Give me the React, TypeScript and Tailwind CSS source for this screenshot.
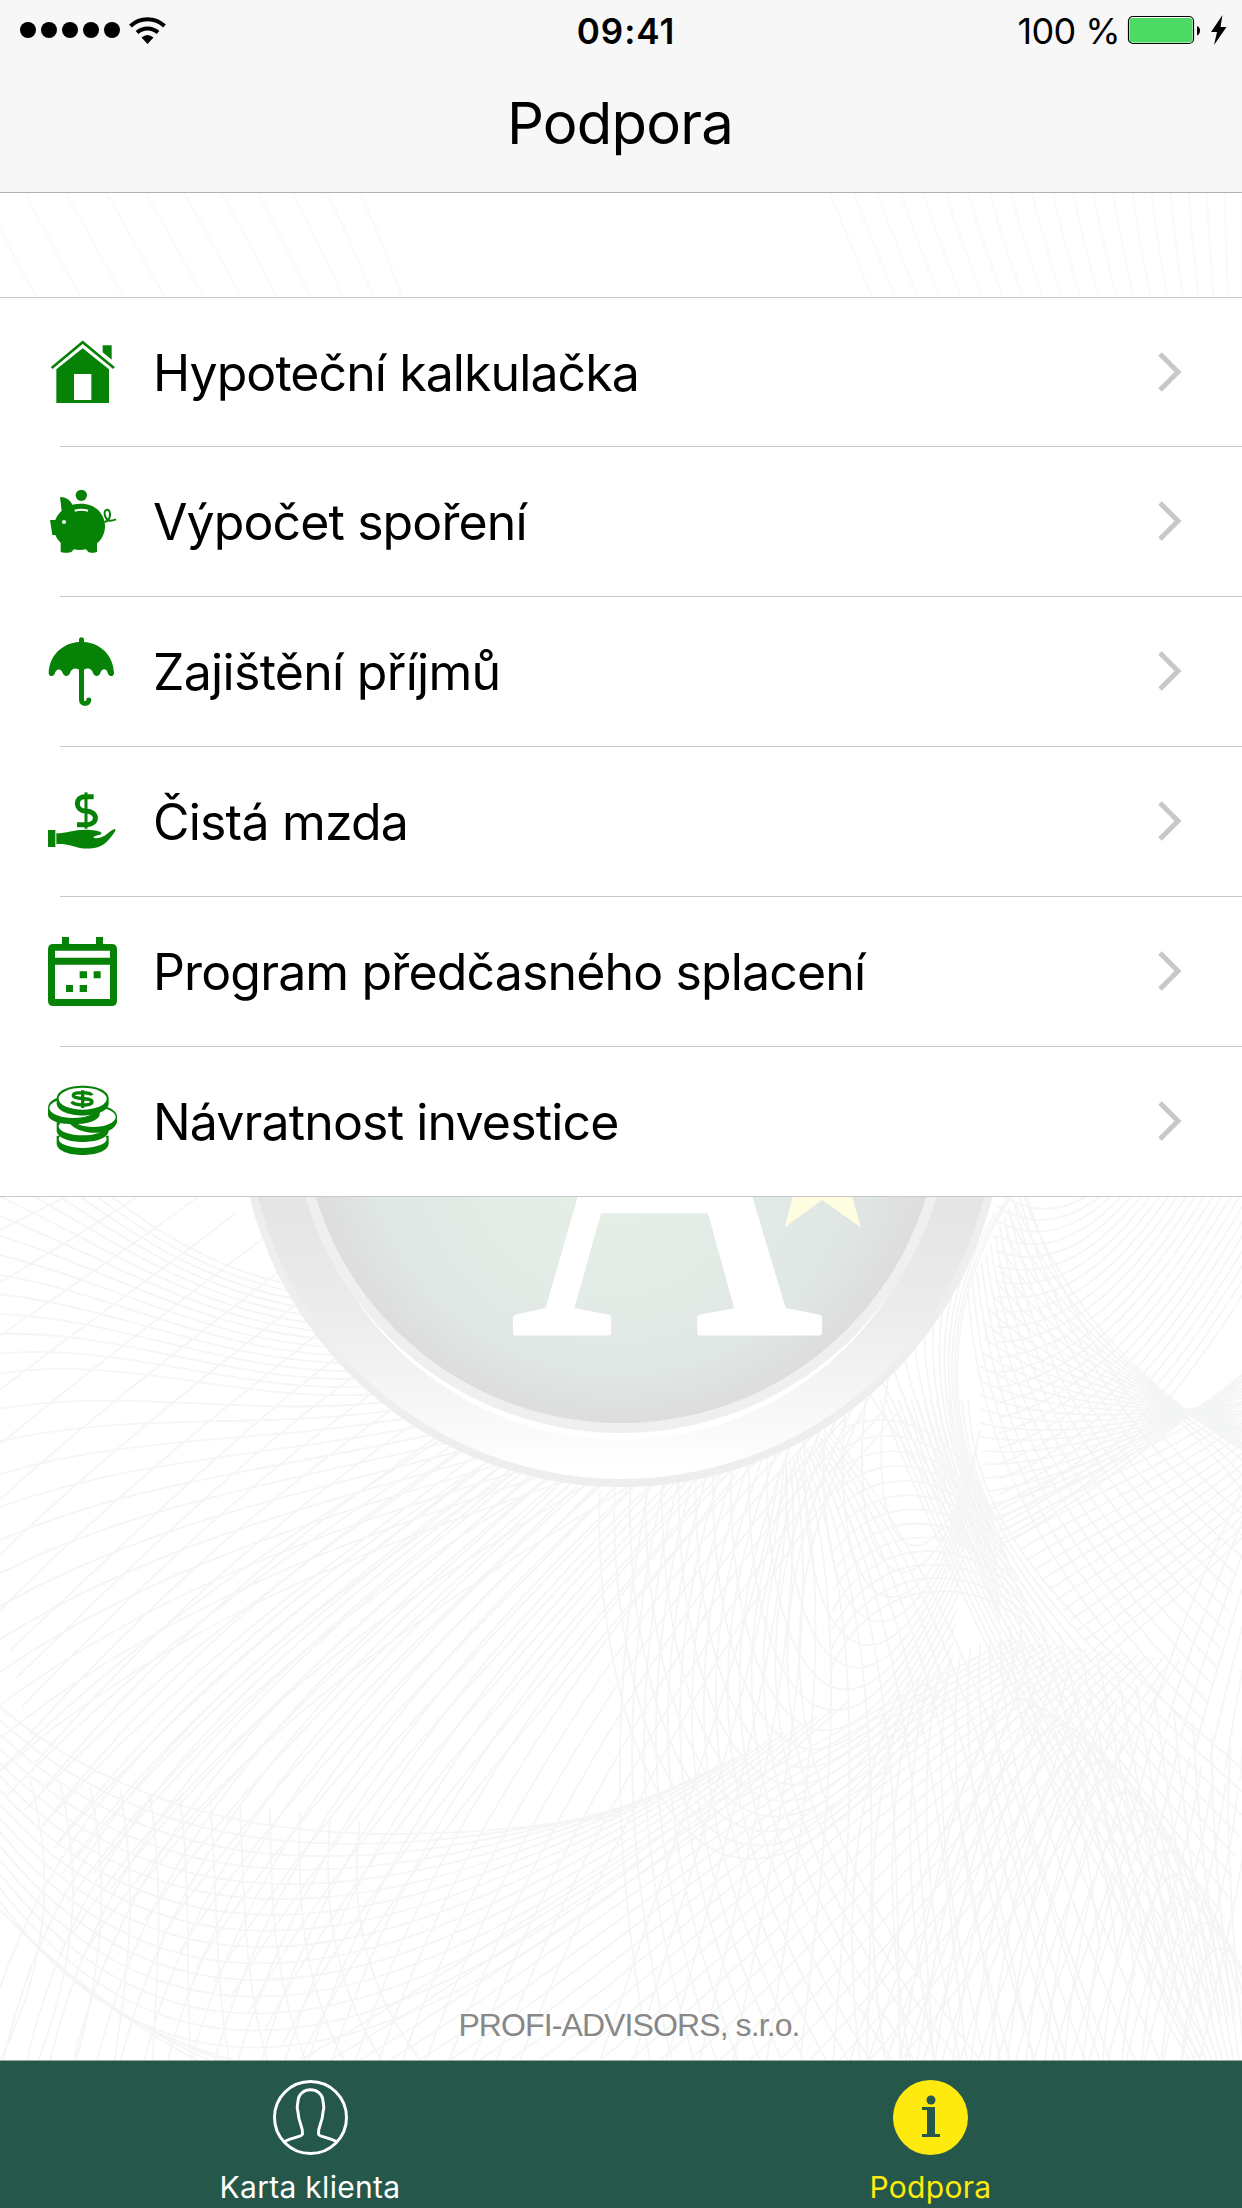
import type { ReactNode } from "react";

type Curve = number[];

const mix = (a: Curve, b: Curve, t: number) => a.map((v, i) => v + (b[i] - v) * t);

function Family({ a, b, m, n }: { a: Curve; b: Curve; m?: Curve; n: number }) {
  const paths: string[] = [];
  for (let i = 0; i <= n; i++) {
    const t = i / n;
    const c = m ? mix(mix(a, m, t), mix(m, b, t), t) : mix(a, b, t);
    const p = c.map((v) => v.toFixed(1));
    paths.push(`M${p[0]} ${p[1]}C${p[2]} ${p[3]} ${p[4]} ${p[5]} ${p[6]} ${p[7]}`);
  }
  return <path d={paths.join("")} />;
}

function Backdrop() {
  return (
    <svg className="absolute inset-0 h-full w-full" viewBox="0 0 1242 2208" fill="none">
      <defs>
        <radialGradient id="glass" gradientUnits="userSpaceOnUse" cx="610" cy="1150" r="330">
          <stop offset="0" stopColor="#e5f1e5" />
          <stop offset="0.45" stopColor="#e3ebe6" />
          <stop offset="0.75" stopColor="#dfe6e5" />
          <stop offset="1" stopColor="#e0e3e2" />
        </radialGradient>
        <radialGradient id="rim" gradientUnits="userSpaceOnUse" cx="621" cy="1104" r="319">
          <stop offset="0.84" stopColor="#dddddd" stopOpacity="0" />
          <stop offset="1" stopColor="#dddddd" />
        </radialGradient>
        <linearGradient id="metal" x1="0" x2="0" y1="1190" y2="1470" gradientUnits="userSpaceOnUse">
          <stop offset="0" stopColor="#e4e4e4" />
          <stop offset="0.45" stopColor="#ececec" />
          <stop offset="1" stopColor="#ffffff" />
        </linearGradient>
      </defs>
      <g stroke="#f9fafa" strokeWidth="2">
        <Family a={[-60, 193, -50, 220, -30, 260, -10, 297]} b={[360, 193, 375, 225, 390, 262, 402, 297]} m={[180, 193, 205, 225, 225, 262, 250, 297]} n={11} />
        <Family a={[830, 193, 845, 230, 858, 262, 872, 297]} b={[1242, 193, 1242, 230, 1242, 262, 1242, 297]} m={[1070, 193, 1078, 230, 1090, 262, 1104, 297]} n={20} />
      </g>
      <g stroke="#f4f6f5" strokeWidth="1.8">
        <Family a={[-10, 1090, 100, 1190, 180, 1270, 320, 1290]} b={[-10, 1375, 130, 1350, 250, 1410, 400, 1392]} n={14} />
        <Family a={[-10, 1410, 130, 1385, 260, 1420, 400, 1400]} b={[-10, 1780, 150, 1640, 320, 1560, 600, 1470]} n={11} />
        <Family a={[-20, 1240, 60, 1200, 100, 1180, 140, 1150]} b={[0, 1610, 130, 1480, 260, 1380, 360, 1300]} n={7} />
        <Family a={[10, 1650, 150, 1520, 250, 1420, 360, 1340]} b={[80, 1960, 220, 1740, 440, 1600, 640, 1480]} n={11} />
        <Family a={[-10, 1780, 150, 1620, 300, 1530, 440, 1440]} b={[300, 2060, 400, 1850, 600, 1650, 740, 1470]} n={18} />
        <Family a={[-20, 2060, 40, 1780, 260, 1640, 480, 1470]} b={[520, 2060, 600, 1860, 730, 1600, 900, 1410]} n={23} />
        <Family a={[-10, 1698, 160, 1850, 380, 1850, 620, 1815]} b={[-10, 1888, 210, 2200, 500, 2010, 850, 1700]} n={14} />
        <Family a={[0, 2060, 40, 1980, 60, 1890, 30, 1780]} b={[420, 2060, 360, 1980, 350, 1900, 360, 1820]} n={11} />
        <Family a={[-10, 1900, 60, 1970, 120, 2020, 200, 2062]} b={[40, 1950, 100, 2010, 160, 2040, 240, 2062]} n={3} />
        <Family a={[300, 2060, 480, 1960, 620, 1840, 1010, 1640]} b={[900, 2060, 1010, 1930, 1090, 1800, 1180, 1660]} n={20} />
        <Family a={[600, 1490, 590, 1700, 690, 2080, 950, 1690]} b={[900, 1320, 840, 1570, 940, 1620, 980, 1430]} m={[720, 1390, 700, 1740, 830, 1930, 960, 1560]} n={16} />
        <Family a={[650, 2060, 610, 1850, 610, 1680, 650, 1480]} b={[980, 2060, 760, 1780, 750, 1600, 900, 1340]} n={15} />
        <Family a={[600, 2060, 680, 1830, 760, 1600, 780, 1470]} b={[1100, 2060, 1040, 1900, 1000, 1650, 830, 1430]} n={15} />
        <Family a={[1022, 1180, 930, 1310, 950, 1440, 995, 1520]} b={[860, 1380, 900, 1440, 960, 1520, 1000, 1620]} n={12} />
        <Family a={[968, 1400, 975, 1520, 1040, 1600, 1250, 1775]} b={[880, 1400, 940, 1560, 1040, 1760, 1200, 2060]} n={14} />
        <Family a={[840, 1430, 900, 1400, 960, 1440, 985, 1500]} b={[830, 1670, 880, 1560, 1000, 1580, 1040, 1640]} n={12} />
        <Family a={[995, 1190, 1040, 1225, 1080, 1205, 1110, 1180]} b={[1000, 1540, 1100, 1490, 1190, 1400, 1310, 1180]} n={23} />
        <Family a={[1022, 1190, 1055, 1290, 1130, 1380, 1250, 1455]} b={[1000, 1545, 1090, 1500, 1180, 1420, 1250, 1370]} m={[950, 1380, 1060, 1440, 1150, 1410, 1250, 1420]} n={25} />
        <Family a={[1022, 1180, 1060, 1320, 1150, 1440, 1250, 1520]} b={[968, 1290, 980, 1470, 1060, 1590, 1200, 1740]} n={12} />
        <Family a={[990, 1510, 1080, 1460, 1180, 1430, 1250, 1375]} b={[1100, 1660, 1150, 1620, 1210, 1570, 1250, 1530]} n={15} />
        <Family a={[1184, 1415, 1210, 1402, 1230, 1385, 1250, 1368]} b={[1150, 1395, 1190, 1430, 1220, 1460, 1250, 1500]} n={8} />
        <Family a={[1150, 1720, 1180, 1620, 1220, 1540, 1250, 1470]} b={[1240, 1780, 1244, 1740, 1246, 1700, 1250, 1660]} n={6} />
        <Family a={[1040, 1620, 1080, 1760, 1110, 1940, 1190, 2060]} b={[1250, 1760, 1240, 1800, 1240, 1900, 1250, 2060]} n={11} />
        <Family a={[900, 2060, 960, 1700, 1050, 1520, 1100, 1950]} b={[1180, 2080, 1190, 1930, 1230, 1920, 1250, 1990]} m={[1030, 2060, 1080, 1540, 1180, 1720, 1240, 2060]} n={15} />
        <Family a={[850, 2060, 900, 1900, 970, 1800, 1020, 1640]} b={[1200, 2060, 1220, 1960, 1240, 1900, 1250, 1800]} n={19} />
        <Family a={[860, 2060, 840, 1900, 860, 1780, 900, 1690]} b={[1160, 2060, 1090, 1900, 1030, 1760, 1020, 1620]} n={12} />
      </g>
      <circle cx="621" cy="1104" r="383" fill="#eeeeee" />
      <circle cx="621" cy="1104" r="375" fill="url(#metal)" />
      <circle cx="621" cy="1120" r="320" fill="#ffffff" />
      <circle cx="621" cy="1104" r="329" fill="#efefef" />
      <circle cx="621" cy="1104" r="319" fill="url(#glass)" />
      <circle cx="621" cy="1104" r="319" fill="url(#rim)" />
      <text
        transform="translate(667 1332) scale(0.94 1.17)"
        textAnchor="middle"
        fontFamily="'Liberation Serif', serif"
        fontSize="458"
        fill="#ffffff"
        stroke="#ffffff"
        strokeWidth="6"
        strokeLinejoin="round"
      >
        A
      </text>
      <path d="M822 1080 L840 1150 L880 1150 L849 1185 L861 1227.500 L822 1200 L784.500 1227.500 L797 1180 Z" fill="#fefde0" />
    </svg>
  );
}

function Glyph({ even, children }: { even?: boolean; children: ReactNode }) {
  return (
    <svg className="relative -top-px size-[69px] shrink-0 overflow-visible" viewBox={even ? "54 501 207 207" : "54 51 207 207"} fill="#068206">
      {children}
    </svg>
  );
}

const House = () => (
  <Glyph>
    <path d="M158 85 237 148V249H79V148ZM132 162V240H184V162Z" fillRule="evenodd" />
    <path d="M218 76h27v43l-27-22Z" />
    <path d="M65 144 158 67 252 144" fill="none" stroke="#068206" strokeWidth="8" />
  </Glyph>
);

const Piggy = () => (
  <Glyph even>
    <circle cx="154" cy="526" r="17" />
    <path d="M90 531c18 0 31 9 37 23 8-2 17-3 27-3 40 0 68 27 71 64 1 22-8 43-24 55v26c-6 3-22 3-26 0-3-3-5-5-7-8-13 3-24 3-37 0-2 3-4 6-7 8-5 3-27 3-32 0v-28c-7-6-12-14-16-23H67l-7-45h16c3-10 10-19 19-28Z" />
    <path d="M223 606c22-3 20-37 9-37-14 0-9 28 6 33 6 1 12-1 20-4" fill="none" stroke="#068206" strokeWidth="6" />
    <circle cx="102" cy="606" r="6" fill="#fff" />
    <path d="M134 572q20-5 40 0" fill="none" stroke="#fff" strokeWidth="6" />
  </Glyph>
);

const Umbrella = () => (
  <Glyph>
    <path d="M147 66v-7a7.500 7.500 0 0 1 15 0v7c50 3 88 41 90 93 0 12-14 12-18 2-4-17-18-17-23-2-4 12-18 12-22 0-4-14-16-17-27-10h-15c-11-7-23-4-27 10-4 12-18 12-22 0-4-14-19-15-24 2-4 10-18 10-18-2 2-52 41-90 91-93Z" />
    <path d="M154.500 140V240c0 14 22 13 22 0" fill="none" stroke="#068206" strokeWidth="15" strokeLinecap="round" />
  </Glyph>
);

const HandDollar = () => (
  <Glyph even>
    <path d="M54 630h22v51H54Z" />
    <path d="M79 640c30 0 52-11 86-11 22 0 44 3 49 9 4 8-21 7-24 13 4 8 25 1 34-4 10-7 21-18 30-20 6 0-1 11-7 19-12 16-23 29-42 35-18 5-37 6-55 3-20-5-38-14-71-12Z" />
    <path d="M191 530H165c-31 0-31 42 2 43 39 1 38 41 2 41H141" fill="none" stroke="#068206" strokeWidth="15" />
    <path d="M168 517v109" stroke="#068206" strokeWidth="9" />
  </Glyph>
);

const Calendar = () => (
  <Glyph>
    <path
      fillRule="evenodd"
      d="M96 51h21v21h81V51h21v21h26q16 0 16 16v154q0 16-16 16H70q-16 0-16-16V88q0-16 16-16h26ZM75 92v21h165V92ZM75 134v103h165V134Z"
    />
    <path d="M149 154h22v21h-22ZM191 154h21v21h-21ZM108 195h21v21h-21ZM149 195h22v21h-22Z" />
  </Glyph>
);

const Coins = () => (
  <Glyph even>
    <path d="M80 650v24c3 45 152 45 156 0v-24Z" />
    <ellipse cx="158" cy="660" rx="72" ry="27" fill="#fff" />
    <path d="M80 610v26c5 44 151 44 156 0v-26Z" />
    <ellipse cx="158" cy="622" rx="72" ry="27" fill="#fff" />
    <path d="M111 590c0-22 38-33 75-33 40 0 75 14 75 36v16c-8 42-105 42-138 8Z" />
    <ellipse cx="190" cy="594" rx="67" ry="30" fill="#fff" />
    <path d="M54 566c0-22 28-36 75-36s83 14 80 36v22c-10 38-152 36-155 0Z" />
    <ellipse cx="130" cy="567" rx="72" ry="30" fill="#fff" />
    <path d="M80 539c0-52 156-52 156 0v15c-5 47-151 47-156 0Z" />
    <ellipse cx="158" cy="539" rx="72" ry="33" fill="#fff" />
    <path d="M186 529c-3-9-56-12-56 0 0 14 56 5 56 20 0 13-54 11-61-1M158 514v53" fill="none" stroke="#068206" strokeWidth="10" />
  </Glyph>
);

const rows = [
  { label: "Hypoteční kalkulačka", icon: <House />, track: "tracking-[-0.92px]" },
  { label: "Výpočet spoření", icon: <Piggy />, track: "tracking-[-0.9px]" },
  { label: "Zajištění příjmů", icon: <Umbrella />, track: "tracking-[-0.7px]" },
  { label: "Čistá mzda", icon: <HandDollar />, track: "tracking-[-0.8px]" },
  { label: "Program předčasného splacení", icon: <Calendar />, track: "tracking-[-0.85px]" },
  { label: "Návratnost investice", icon: <Coins />, track: "tracking-[-0.85px]" },
];

function StatusBar() {
  return (
    <div className="grid h-[60px] grid-cols-3 items-center pr-[15px] pl-5">
      <div className="flex items-center gap-[9px]">
        <div className="flex gap-[5px]">
          {[0, 1, 2, 3, 4].map((i) => (
            <span key={i} className="size-4 rounded-full bg-black" />
          ))}
        </div>
        <svg className="h-[27px] w-[37px]" viewBox="0 0 37 27" fill="none" stroke="#000">
          <path d="M1.500 9a24.500 24.500 0 0 1 34 0" strokeWidth="4" />
          <path d="M8 15.500a15.500 15.500 0 0 1 21 0" strokeWidth="4" />
          <path d="M12.500 20.500q6-5 12 0l-6 6.500Z" fill="#000" stroke="none" />
        </svg>
      </div>
      <div className="pt-[2px] pl-[5px] text-center text-[35px] font-semibold tracking-[1px]">09:41</div>
      <div className="flex items-center justify-end">
        <span className="pt-[2px] text-[36px] tracking-[-0.6px] whitespace-pre">100 %</span>
        <svg className="ml-[7px] h-[30px] w-[100px]" viewBox="0 0 100 30">
          <rect x="1.500" y="1.500" width="65" height="27" rx="4.500" fill="#fff" stroke="#000" strokeWidth="1.200" />
          <rect x="2.500" y="3" width="63" height="24.500" rx="3" fill="#4cd964" />
          <path d="M70 11q3 1 3 4.500t-3 5Z" />
          <path d="M95.500 0 84 17h6l-3 13 12.500-18h-6Z" />
        </svg>
      </div>
    </div>
  );
}

export default function App() {
  return (
    <div className="relative flex h-[2208px] w-[1242px] flex-col overflow-hidden bg-white font-['Inter','Noto_Sans',sans-serif] text-black">
      <Backdrop />
      <header className="relative h-[193px] border-b border-[#b2b2b2] bg-[#f7f7f7]">
        <StatusBar />
        <h1 className="mt-[25px] pr-[2px] text-center text-[58px] leading-[76px] tracking-[-0.8px]">Podpora</h1>
      </header>
      <ul className="relative mt-[104px] border-y border-[#c8c7cc] bg-white">
        {rows.map((r, i) => (
          <li key={r.label} className="relative flex h-[150px] items-center pr-[59px] pl-12 first:h-[149px] last:h-[149px]">
            {r.icon}
            <span className={`ml-[36px] flex-1 text-[50px] leading-none ${r.track}`}>{r.label}</span>
            <svg className="relative -top-px h-[40px] w-[26px]" viewBox="0 0 26 40" fill="none">
              <path d="M3 2 21 20 3 38" stroke="#c7c7cc" strokeWidth="5" />
            </svg>
            {i < rows.length - 1 && <span className="absolute right-0 bottom-0 left-[60px] h-px bg-[#c8c7cc]" />}
          </li>
        ))}
      </ul>
      <div className="relative flex flex-1 items-end justify-center pb-[14px] pl-[16px]">
        <p className="font-['Liberation_Sans',sans-serif] text-[32px] leading-[42px] tracking-[-0.9px] text-[#888]">PROFI-ADVISORS, s.r.o.</p>
      </div>
      <nav className="relative flex h-[148px] border-t border-[#9ba9a3] bg-[#25574a]">
        <div className="flex flex-1 flex-col items-center pt-[19px] text-white">
          <svg className="size-[75px]" viewBox="0 0 75 75" fill="none" stroke="#fff" strokeWidth="3">
            <circle cx="37.500" cy="37.500" r="36" />
            <path d="M11.500 61.500C20 57 29 57 29.500 54c.5-9-4-10-4.500-22-2-6 0-8 0-11 1-15 24-15 25 0 0 3 2 5 0 11-.5 12-5 13-4.500 22 .5 3 9.500 3 18 7.500" />
          </svg>
          <span className="mt-3 text-[30px] leading-[40px] tracking-[0.3px]">Karta klienta</span>
        </div>
        <div className="flex flex-1 flex-col items-center pt-[19px] pr-[2px] text-[#ffea0f]">
          <div className="flex size-[75px] items-center justify-center rounded-full bg-[#ffea0f] pb-1 pl-px">
            <svg className="h-[42px] w-5" viewBox="0 0 20 42" fill="#25574a">
              <circle cx="10" cy="5" r="4.500" />
              <path d="M1 12h13v27h5v3H1v-3h5V15H1Z" />
            </svg>
          </div>
          <span className="mt-3 pl-px text-[30px] leading-[40px] tracking-[0.3px]">Podpora</span>
        </div>
      </nav>
    </div>
  );
}
